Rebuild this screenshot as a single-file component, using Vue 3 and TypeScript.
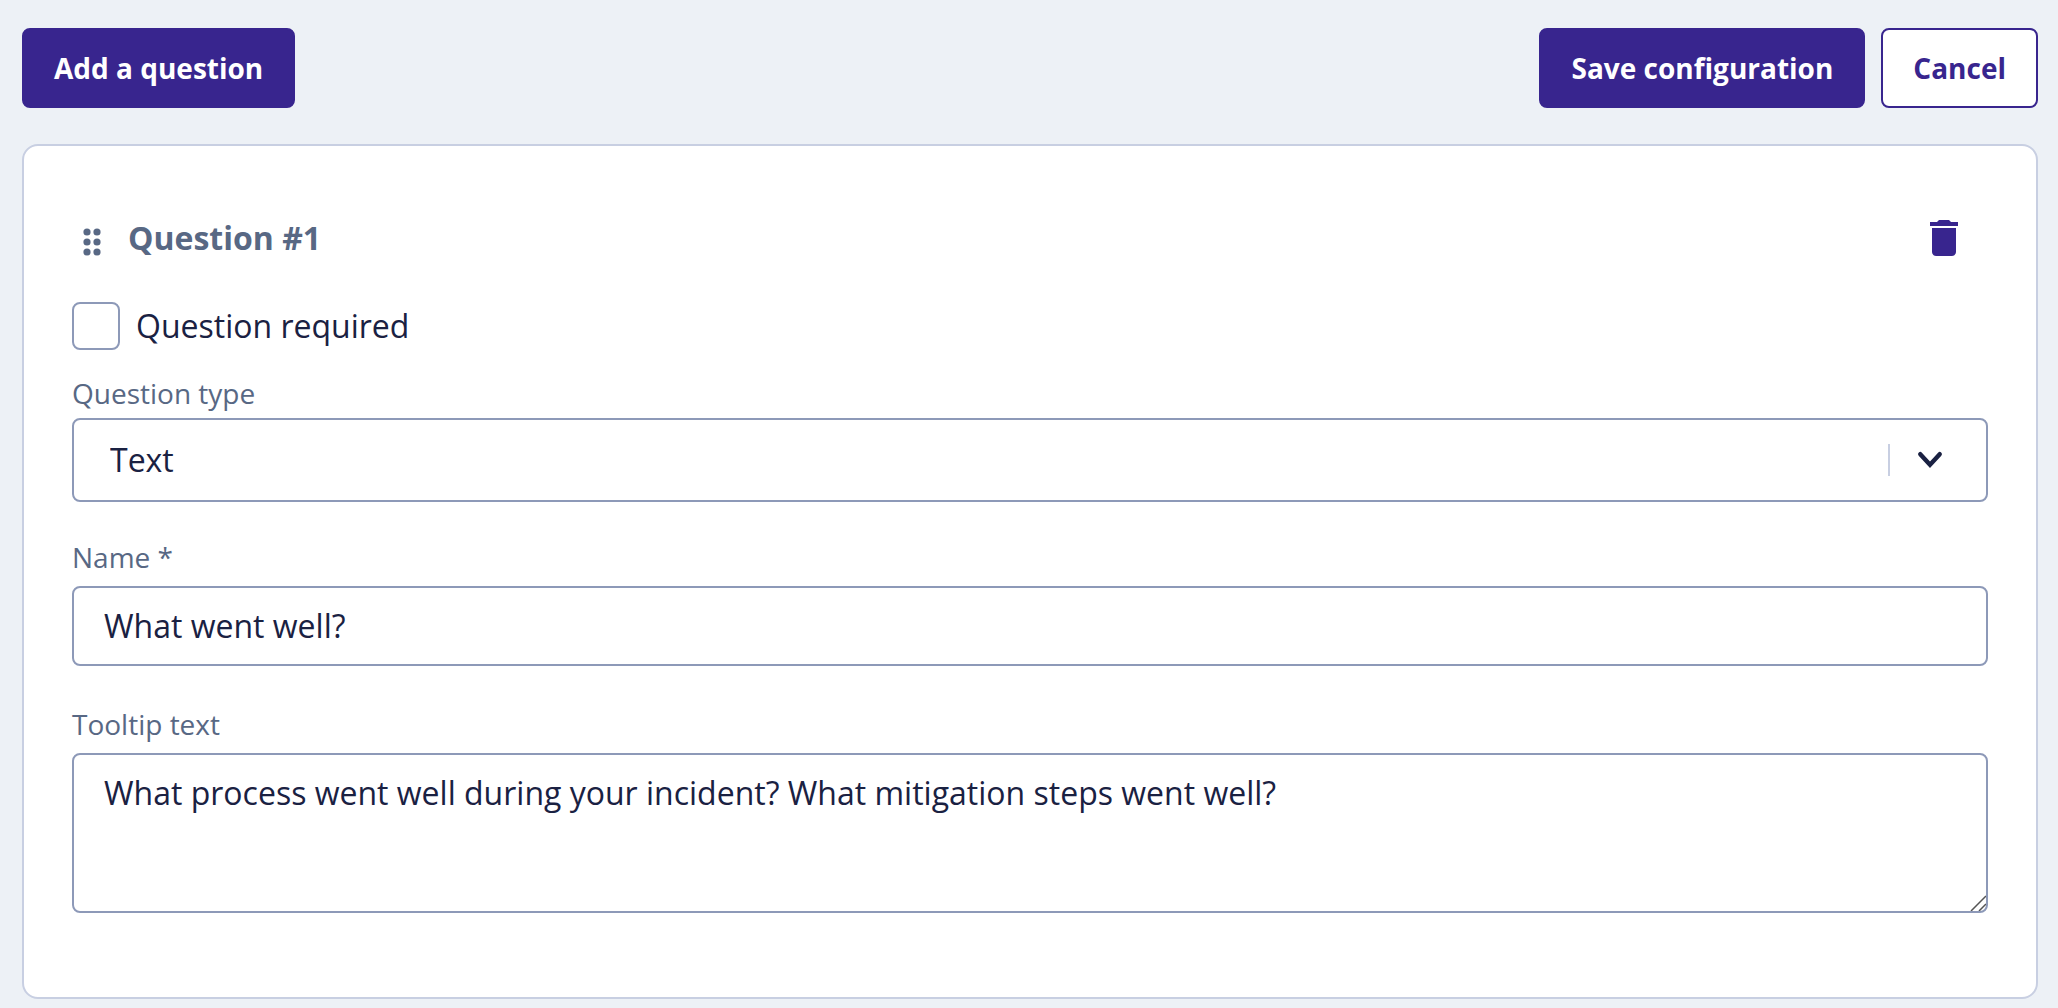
<script setup lang="ts">
import { ref } from 'vue'

const required = ref(false)
const questionType = ref('Text')
const name = ref('What went well?')
const tooltip = ref(
  'What process went well during your incident? What mitigation steps went well?'
)
</script>

<template>
  <main class="page">
    <header class="toolbar">
      <button type="button" class="btn primary">Add a question</button>
      <div class="actions">
        <button type="button" class="btn primary">Save configuration</button>
        <button type="button" class="btn">Cancel</button>
      </div>
    </header>

    <section class="card">
      <div class="card-head">
        <svg class="drag" width="40" height="48" viewBox="0 0 40 48" aria-hidden="true">
          <circle cx="15" cy="18" r="3.6" />
          <circle cx="25" cy="18" r="3.6" />
          <circle cx="15" cy="28" r="3.6" />
          <circle cx="25" cy="28" r="3.6" />
          <circle cx="15" cy="38" r="3.6" />
          <circle cx="25" cy="38" r="3.6" />
        </svg>
        <h2 class="title">Question #1</h2>
        <button type="button" class="delete" aria-label="Delete question">
          <svg width="48" height="48" viewBox="0 0 24 24" aria-hidden="true">
            <path d="M6 19c0 1.1.9 2 2 2h8c1.1 0 2-.9 2-2V7H6v12zM19 4h-3.5l-1-1h-5l-1 1H5v2h14V4z" />
          </svg>
        </button>
      </div>

      <div class="check">
        <input id="required" v-model="required" type="checkbox" class="box" />
        <label for="required">Question required</label>
      </div>

      <div class="field compact">
        <label for="type" class="label">Question type</label>
        <div class="select-wrap">
          <select id="type" v-model="questionType" class="control select">
            <option>Text</option>
          </select>
          <div class="indicator">
            <svg width="40" height="40" viewBox="0 0 40 40" aria-hidden="true">
              <path d="M10.3 14.2 L20 24.8 L29.7 14.2" />
            </svg>
          </div>
        </div>
      </div>

      <div class="field">
        <label for="name" class="label">Name *</label>
        <input id="name" v-model="name" type="text" class="control text" />
      </div>

      <div class="field">
        <label for="tooltip" class="label">Tooltip text</label>
        <div class="area-wrap">
          <textarea id="tooltip" v-model="tooltip" class="control area"></textarea>
          <svg class="grip" width="16" height="16" viewBox="0 0 16 16" aria-hidden="true">
            <path d="M1 16 L16 1 M9 16 L16 9" />
          </svg>
        </div>
      </div>
    </section>
  </main>
</template>

<style>
body {
  margin: 0;
  background: #edf1f6;
}
</style>

<style scoped>
.page,
.page * {
  box-sizing: border-box;
}

.page {
  padding: 28px 20px 9px 22px;
  font-family: 'Open Sans', 'Noto Sans', sans-serif;
  font-size: 32px;
  line-height: 48px;
  color: #1a2142;
}

.toolbar,
.actions,
.card-head,
.check {
  display: flex;
  align-items: center;
}

.toolbar {
  justify-content: space-between;
  margin-bottom: 36px;
}

.actions {
  gap: 16px;
}

.btn {
  height: 80px;
  padding: 0 30px;
  border: 2px solid #38258e;
  border-radius: 8px;
  background: #fff;
  color: #38258e;
  font: 700 28px/40px 'Open Sans', 'Noto Sans', sans-serif;
  cursor: pointer;
}

.btn.primary {
  background: #38258e;
  color: #fff;
}

.card {
  padding: 48px 48px 84px;
  border: 2px solid #c8cfe2;
  border-radius: 16px;
  background: #fff;
}

.card-head {
  gap: 16px;
  margin-bottom: 20px;
}

.drag {
  fill: #586884;
}

.title {
  flex: 1;
  margin: 0;
  color: #586884;
  font-size: 32px;
  font-weight: 700;
  line-height: 48px;
}

.delete {
  display: flex;
  padding: 20px;
  border: 0;
  background: none;
  fill: #38258e;
  cursor: pointer;
}

.check {
  gap: 16px;
  margin-bottom: 24px;
}

.box {
  appearance: none;
  width: 48px;
  height: 48px;
  margin: 0;
  border: 2px solid #8d99b8;
  border-radius: 8px;
  background: #fff;
}

.box:checked {
  background: #38258e;
}

.field {
  display: flex;
  flex-direction: column;
  gap: 10px;
}

.field + .field {
  margin-top: 39px;
}

.field.compact {
  gap: 6px;
}

.field.compact + .field {
  margin-top: 36px;
}

.label {
  color: #586884;
  font-size: 28px;
  line-height: 38px;
}

.control {
  display: block;
  width: 100%;
  margin: 0;
  border: 2px solid #8d99b8;
  border-radius: 8px;
  background: #fff;
  color: #1a2142;
  font: 400 32px/48px 'Open Sans', 'Noto Sans', sans-serif;
}

.text {
  height: 80px;
  padding: 0 30px 2px;
}

.select-wrap,
.area-wrap {
  position: relative;
}

.select {
  appearance: none;
  height: 84px;
  padding: 0 100px 0 36px;
}

.indicator {
  position: absolute;
  top: 26px;
  right: 38px;
  display: flex;
  align-items: center;
  height: 32px;
  padding-left: 20px;
  border-left: 2px solid #c8cfe2;
  pointer-events: none;
}

.indicator path {
  fill: none;
  stroke: #1a2142;
  stroke-width: 4.4;
  stroke-linecap: round;
}

.area {
  height: 160px;
  padding: 14px 30px;
  resize: none;
}

.grip {
  position: absolute;
  right: 2px;
  bottom: 2px;
  fill: none;
  stroke: #555;
  stroke-width: 1.5;
  pointer-events: none;
}
</style>
